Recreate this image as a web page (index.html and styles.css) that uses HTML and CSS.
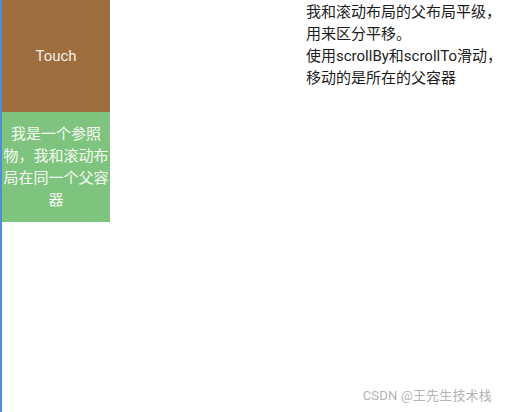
FILE: index.html
```html
<!DOCTYPE html>
<html lang="zh-CN">
<head>
<meta charset="utf-8">
<title>Scroll</title>
<link rel="stylesheet" href="styles.css">
</head>
<body>
  <div class="screen">
    <div class="column">
      <div class="touch">Touch</div>
      <div class="ref">我是一个参照<br>物，我和滚动布<br>局在同一个父容<br>器</div>
    </div>
    <div class="note">我和滚动布局的父布局平级，<br>用来区分平移。<br>使用scrollBy和scrollTo滑动，<br>移动的是所在的父容器</div>
    <div class="mark">CSDN @王先生技术栈</div>
  </div>
</body>
</html>
```
FILE: styles.css
```css
html, body {
  margin: 0;
  padding: 0;
  background: #fff;
}

.screen {
  position: relative;
  width: 506px;
  height: 412px;
  display: flex;
  border-left: 2px solid #4a8fd8;
  box-sizing: border-box;
  font-family: Roboto, "Noto Sans CJK SC", sans-serif;
  font-size: 15px;
}

.column {
  width: 108px;
  display: flex;
  flex-direction: column;
}

.touch {
  height: 112px;
  background: #9e6e3e;
  color: #f4efe6;
  display: flex;
  align-items: center;
  justify-content: center;
}

.ref {
  height: 110px;
  background: #7fc47e;
  color: #f6fbf4;
  display: flex;
  align-items: center;
  justify-content: center;
  text-align: center;
  line-height: 22px;
  white-space: nowrap;
}

.note {
  margin-left: 196px;
  padding-top: 1px;
  color: #1c1c1c;
  line-height: 22px;
  white-space: nowrap;
}

.mark {
  position: absolute;
  right: 14px;
  bottom: 8px;
  font-size: 13px;
  color: #b4b4b4;
  letter-spacing: 0.2px;
}
```
